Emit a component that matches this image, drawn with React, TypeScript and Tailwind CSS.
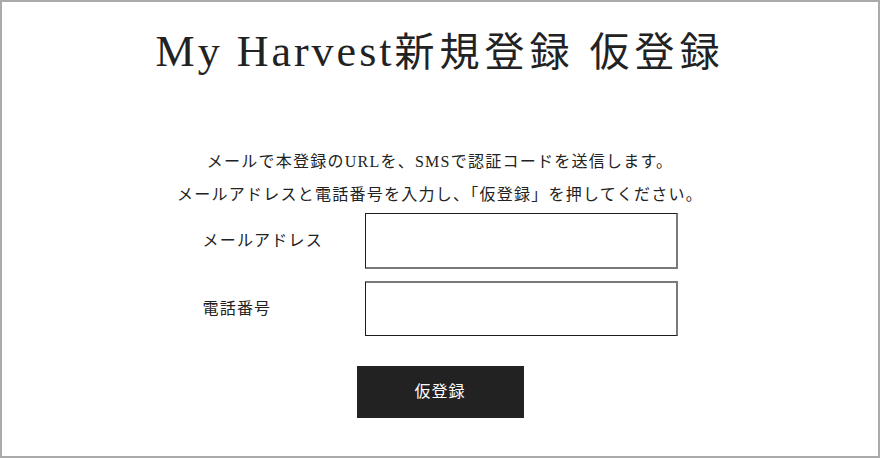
const serif = "font-['Liberation_Serif','Noto_Sans_CJK_JP',serif]";

export default function App() {
  return (
    <div className={`w-[880px] h-[458px] border-2 border-[#aaaaaa] bg-white text-[#222222] ${serif}`}>
      <h1 className="pt-[20px] text-center text-[40px] leading-[60px] tracking-[5px]">
        <span className="text-[44px] tracking-[3px]">My Harvest</span>新規登録 仮登録
      </h1>

      <div className="mt-[62px] text-center text-[16px] leading-[33px] tracking-[1.25px]">
        <p>メールで本登録のURLを、SMSで認証コードを送信します。</p>
        <p>メールアドレスと電話番号を入力し、「仮登録」を押してください。</p>
      </div>

      <form className="mx-auto mt-[2px] flex w-[475px] flex-col gap-[12px]">
        <div className="flex items-center justify-between">
          <label className="text-[16px] tracking-[1.2px]">メールアドレス</label>
          <input
            type="email"
            className="h-[56px] w-[313px] border-t border-l border-b-2 border-r-2 border-t-[#1c1c1c] border-l-[#1c1c1c] border-b-[#7a7a7a] border-r-[#7a7a7a] bg-white outline-none"
          />
        </div>
        <div className="flex items-center justify-between">
          <label className="text-[16px] tracking-[1.2px]">電話番号</label>
          <input
            type="tel"
            className="h-[55px] w-[313px] border-t-2 border-l border-b border-r-2 border-t-[#7a7a7a] border-l-[#1c1c1c] border-b-[#1c1c1c] border-r-[#7a7a7a] bg-white outline-none"
          />
        </div>
      </form>

      <div className="mt-[30px] flex justify-center">
        <button className="h-[52px] w-[167px] bg-[#222222] text-[16px] tracking-[1px] text-white">
          仮登録
        </button>
      </div>
    </div>
  );
}
